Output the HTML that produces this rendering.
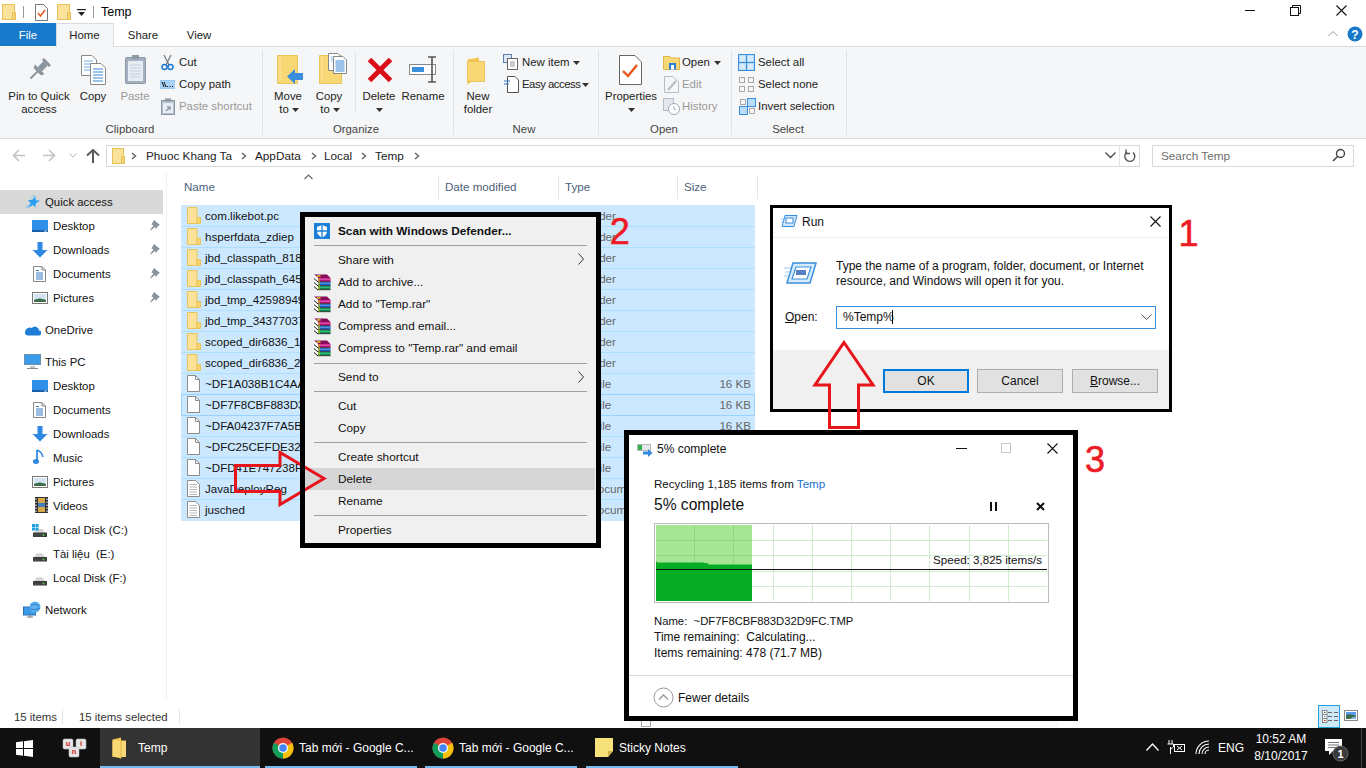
<!DOCTYPE html><html><head><meta charset="utf-8"><title>Temp</title><style>
html,body{margin:0;padding:0;width:1366px;height:768px;overflow:hidden;background:#fff;position:relative;font-family:"Liberation Sans",sans-serif;font-size:12px;color:#000}
.t{position:absolute;white-space:nowrap}
.r{position:absolute}
</style></head><body>
<svg class="r" style="left:2px;top:4px;" width="14" height="16" viewBox="0 0 14 16"><rect x="0.5" y="0.5" width="12" height="15" fill="#fbe29a" stroke="#e8c15a"/><rect x="10.5" y="8.5" width="3" height="7" fill="#f6d373" stroke="#e8c15a"/></svg>
<div class="r" style="left:23px;top:6px;width:1px;height:12px;background:#999;"></div>
<svg class="r" style="left:35px;top:4px;" width="13" height="17" viewBox="0 0 13 17"><path d="M0.5 0.5H8.5L12.5 4.5V16.5H0.5Z" fill="#fff" stroke="#777"/><path d="M3 9L5.5 12L10 6" fill="none" stroke="#e85c1c" stroke-width="1.6"/></svg>
<svg class="r" style="left:57px;top:4px;" width="14" height="16" viewBox="0 0 14 16"><rect x="0.5" y="0.5" width="12" height="15" fill="#fbe29a" stroke="#e8c15a"/><rect x="10.5" y="8.5" width="3" height="7" fill="#f6d373" stroke="#e8c15a"/></svg>
<svg class="r" style="left:77px;top:9px;" width="9" height="8" viewBox="0 0 9 8"><rect x="0" y="0" width="9" height="1.2" fill="#222"/><path d="M1 3H8L4.5 7Z" fill="#222"/></svg>
<div class="r" style="left:93px;top:6px;width:1px;height:12px;background:#999;"></div>
<div class="t " style="left:101px;top:4.0px;font-size:12.5px;line-height:16px;color:#000;">Temp</div>
<div class="r" style="left:1245px;top:10px;width:10px;height:1px;background:#111;"></div>
<svg class="r" style="left:1290px;top:5px;" width="11" height="11" viewBox="0 0 11 11"><rect x="0.5" y="2.5" width="8" height="8" fill="none" stroke="#111"/><path d="M2.5 2.5V0.5H10.5V8.5H8.5" fill="none" stroke="#111"/></svg>
<svg class="r" style="left:1336px;top:5px;" width="11" height="11" viewBox="0 0 11 11"><path d="M0.5 0.5L10.5 10.5M10.5 0.5L0.5 10.5" stroke="#111" stroke-width="1.1"/></svg>
<div class="r" style="left:0px;top:23px;width:56px;height:23px;background:#1979ca;"></div>
<div class="t" style="left:-32.0px;width:120px;text-align:center;top:27.4px;font-size:11.4px;line-height:16px;color:#fff;">File</div>
<div class="r" style="left:56px;top:23px;width:58px;height:24px;background:#f5f6f7;border:1px solid #dadbdc;border-bottom:none;box-sizing:border-box"></div>
<div class="t" style="left:24.5px;width:120px;text-align:center;top:27.4px;font-size:11.4px;line-height:16px;color:#222;">Home</div>
<div class="t" style="left:83.0px;width:120px;text-align:center;top:27.4px;font-size:11.4px;line-height:16px;color:#222;">Share</div>
<div class="t" style="left:139.0px;width:120px;text-align:center;top:27.4px;font-size:11.4px;line-height:16px;color:#222;">View</div>
<div class="r" style="left:114px;top:46px;width:1252px;height:1px;background:#dadbdc;"></div>
<svg class="r" style="left:1328px;top:30px;" width="10" height="7" viewBox="0 0 10 7"><path d="M0.5 6L5 1.5L9.5 6" fill="none" stroke="#999" stroke-width="1"/></svg>
<svg class="r" style="left:1347px;top:26px;" width="16" height="16" viewBox="0 0 16 16"><circle cx="8" cy="8" r="7.5" fill="#1979ca"/><text x="8" y="12.5" font-family="Liberation Sans" font-weight="bold" font-size="12" fill="#fff" text-anchor="middle">?</text></svg>
<div class="r" style="left:0px;top:47px;width:1366px;height:91px;background:#f5f6f7;"></div>
<div class="r" style="left:0px;top:138px;width:1366px;height:1px;background:#dadbdc;"></div>
<div class="r" style="left:262px;top:50px;width:1px;height:85px;background:#e2e3e4;"></div>
<div class="r" style="left:453px;top:50px;width:1px;height:85px;background:#e2e3e4;"></div>
<div class="r" style="left:598px;top:50px;width:1px;height:85px;background:#e2e3e4;"></div>
<div class="r" style="left:731px;top:50px;width:1px;height:85px;background:#e2e3e4;"></div>
<div class="r" style="left:846px;top:50px;width:1px;height:85px;background:#e2e3e4;"></div>
<div class="r" style="left:355px;top:52px;width:1px;height:60px;background:#e2e3e4;"></div>
<div class="t" style="left:70.0px;width:120px;text-align:center;top:121.0px;font-size:11.4px;line-height:16px;color:#444;">Clipboard</div>
<div class="t" style="left:296.0px;width:120px;text-align:center;top:121.0px;font-size:11.4px;line-height:16px;color:#444;">Organize</div>
<div class="t" style="left:464.0px;width:120px;text-align:center;top:121.0px;font-size:11.4px;line-height:16px;color:#444;">New</div>
<div class="t" style="left:604.0px;width:120px;text-align:center;top:121.0px;font-size:11.4px;line-height:16px;color:#444;">Open</div>
<div class="t" style="left:728.0px;width:120px;text-align:center;top:121.0px;font-size:11.4px;line-height:16px;color:#444;">Select</div>
<svg class="r" style="left:27px;top:58px;" width="24" height="24" viewBox="0 0 24 24"><g transform="rotate(45 12 12)" fill="#8a959e"><rect x="7" y="0" width="10" height="3" rx="0.5"/><rect x="9" y="3" width="6" height="8"/><path d="M5 11H19L17 14.5H7Z"/><rect x="11" y="14" width="2" height="10"/></g></svg>
<div class="t" style="left:-21.0px;width:120px;text-align:center;top:88.0px;font-size:11.4px;line-height:16px;color:#222;">Pin to Quick</div>
<div class="t" style="left:-21.0px;width:120px;text-align:center;top:101.0px;font-size:11.4px;line-height:16px;color:#222;">access</div>
<svg class="r" style="left:81px;top:55px;" width="26" height="30" viewBox="0 0 26 30"><path d="M0.5 0.5H11L15.5 5V20.5H0.5Z" fill="#fff" stroke="#888"/><g stroke="#6fa8e6"><path d="M3 6H12M3 9H12M3 12H12M3 15H12"/></g><path d="M9.5 8.5H20L24.5 13V29.5H9.5Z" fill="#fff" stroke="#888"/><g stroke="#3a86d6"><path d="M12 14H22M12 17H22M12 20H22M12 23H22M12 26H22"/></g></svg>
<div class="t" style="left:33.0px;width:120px;text-align:center;top:88.0px;font-size:11.4px;line-height:16px;color:#222;">Copy</div>
<svg class="r" style="left:125px;top:54px;" width="22" height="31" viewBox="0 0 22 31"><rect x="0.5" y="3.5" width="20" height="26" rx="1" fill="#a4b0bf" stroke="#8d98a6"/><rect x="3" y="7" width="15" height="20" fill="#e8edf4"/><g stroke="#c3cfdd"><path d="M5 11H16M5 14H16M5 17H16M5 20H16M5 23H16"/></g><rect x="7" y="1" width="7" height="4" fill="#8d98a6"/></svg>
<div class="t" style="left:75.0px;width:120px;text-align:center;top:88.0px;font-size:11.4px;line-height:16px;color:#999;">Paste</div>
<svg class="r" style="left:161px;top:54px;" width="13" height="17" viewBox="0 0 13 17"><path d="M3 1L8 11M10 1L5 11" stroke="#777" stroke-width="1.2"/><circle cx="3.5" cy="13" r="2.5" fill="none" stroke="#1f7ad0" stroke-width="1.5"/><circle cx="9.5" cy="13" r="2.5" fill="none" stroke="#1f7ad0" stroke-width="1.5"/></svg>
<div class="t " style="left:179px;top:54.0px;font-size:11.4px;line-height:16px;color:#222;">Cut</div>
<svg class="r" style="left:160px;top:80px;" width="15" height="9" viewBox="0 0 15 9"><rect x="0" y="0" width="15" height="9" fill="#a9d3f5" stroke="#7fb6e6" stroke-width="0.6"/><path d="M2 2L4 7M4 2L6 7" stroke="#111" stroke-width="1"/><path d="M7 6.5H8M9.5 6.5H10.5M12 6.5H13" stroke="#111" stroke-width="1"/></svg>
<div class="t " style="left:179px;top:76.0px;font-size:11.4px;line-height:16px;color:#222;">Copy path</div>
<svg class="r" style="left:161px;top:98px;" width="14" height="17" viewBox="0 0 14 17"><rect x="0.5" y="2.5" width="13" height="14" fill="#b6c1cf" stroke="#8d98a6"/><rect x="2" y="5" width="10" height="10" fill="#e8edf4"/><rect x="4" y="0.5" width="6" height="3" fill="#8d98a6"/><path d="M5 13L9 9M6 9H9V12" stroke="#8d98a6" stroke-width="1.3" fill="none"/></svg>
<div class="t " style="left:179px;top:98.0px;font-size:11.4px;line-height:16px;color:#999;">Paste shortcut</div>
<svg class="r" style="left:276px;top:55px;" width="28" height="30" viewBox="0 0 28 30"><path d="M1.5 0.5H21.5V28.5H1.5Z" fill="#f8d775" stroke="#e9c35b"/><path d="M4 2V27" stroke="#fbe7a6" stroke-width="1"/><path d="M11 21.5L19 14V18H27V25H19V29Z" fill="#3a8fdc"/></svg>
<div class="t" style="left:228.0px;width:120px;text-align:center;top:88.0px;font-size:11.4px;line-height:16px;color:#222;">Move</div>
<div class="t" style="left:224.0px;width:120px;text-align:center;top:101.0px;font-size:11.4px;line-height:16px;color:#222;">to</div>
<svg class="r" style="left:292px;top:108px;" width="7" height="4" viewBox="0 0 7 4"><path d="M0 0H7L3.5 4Z" fill="#333"/></svg>
<svg class="r" style="left:318px;top:53px;" width="29" height="32" viewBox="0 0 29 32"><path d="M1.5 2.5H23.5V30.5H1.5Z" fill="#f8d775" stroke="#e9c35b"/><path d="M4 4V29" stroke="#fbe7a6" stroke-width="1"/><path d="M10.5 0.5H20L23.5 4V17.5H10.5Z" fill="#fff" stroke="#888"/><g stroke="#9cc3ee"><path d="M12.5 4H19M12.5 6H19M12.5 8H19"/></g><path d="M15.5 3.5H25L28.5 7V20.5H15.5Z" fill="#fff" stroke="#888"/><g stroke="#3a86d6"><path d="M17.5 8H26.5M17.5 10H26.5M17.5 12H26.5M17.5 14H26.5M17.5 16H26.5M17.5 18H26.5"/></g></svg>
<div class="t" style="left:269.0px;width:120px;text-align:center;top:88.0px;font-size:11.4px;line-height:16px;color:#222;">Copy</div>
<div class="t" style="left:265.0px;width:120px;text-align:center;top:101.0px;font-size:11.4px;line-height:16px;color:#222;">to</div>
<svg class="r" style="left:333px;top:108px;" width="7" height="4" viewBox="0 0 7 4"><path d="M0 0H7L3.5 4Z" fill="#333"/></svg>
<svg class="r" style="left:366px;top:56px;" width="28" height="28" viewBox="0 0 28 28"><path d="M3.5 3.5L24.5 24.5M24.5 3.5L3.5 24.5" stroke="#d9101a" stroke-width="5"/></svg>
<div class="t" style="left:319.0px;width:120px;text-align:center;top:88.0px;font-size:11.4px;line-height:16px;color:#222;">Delete</div>
<svg class="r" style="left:376px;top:108px;" width="7" height="4" viewBox="0 0 7 4"><path d="M0 0H7L3.5 4Z" fill="#333"/></svg>
<svg class="r" style="left:409px;top:56px;" width="30" height="27" viewBox="0 0 30 27"><rect x="0.5" y="8.5" width="26" height="10" fill="#fff" stroke="#888"/><rect x="3" y="11" width="12" height="5" fill="#3a8fdc"/><path d="M19 1H27M23 1V26M19 26H27" stroke="#555" stroke-width="1.6" fill="none"/></svg>
<div class="t" style="left:363.0px;width:120px;text-align:center;top:88.0px;font-size:11.4px;line-height:16px;color:#222;">Rename</div>
<svg class="r" style="left:467px;top:57px;" width="21" height="28" viewBox="0 0 21 28"><path d="M0.5 2.5L12 0.5V20L0.5 27.5Z" fill="#f3c74f"/><path d="M0.5 4.5H17.5V24.5H0.5Z" fill="#f8d775" stroke="#e9c35b"/></svg>
<div class="t" style="left:418.0px;width:120px;text-align:center;top:88.0px;font-size:11.4px;line-height:16px;color:#222;">New</div>
<div class="t" style="left:418.0px;width:120px;text-align:center;top:101.0px;font-size:11.4px;line-height:16px;color:#222;">folder</div>
<svg class="r" style="left:503px;top:54px;" width="15" height="16" viewBox="0 0 15 16"><rect x="0.5" y="0.5" width="8" height="8" fill="#dce9f7" stroke="#5a7ea8"/><rect x="4.5" y="4.5" width="10" height="11" fill="#fff" stroke="#666"/><path d="M7 8H12M7 10H12M7 12H12" stroke="#999"/></svg>
<div class="t " style="left:522px;top:54.0px;font-size:11.4px;line-height:16px;color:#222;">New item</div>
<svg class="r" style="left:573px;top:61px;" width="7" height="4" viewBox="0 0 7 4"><path d="M0 0H7L3.5 4Z" fill="#333"/></svg>
<svg class="r" style="left:504px;top:76px;" width="15" height="17" viewBox="0 0 15 17"><path d="M3.5 0.5H11L14.5 4V16.5H3.5Z" fill="#fff" stroke="#555"/><path d="M0 5H6M0 8H5" stroke="#2f7ad0" stroke-width="1.2"/></svg>
<div class="t " style="left:522px;top:76.0px;font-size:11.4px;line-height:16px;color:#222;letter-spacing:-0.5px">Easy access</div>
<svg class="r" style="left:582px;top:83px;" width="7" height="4" viewBox="0 0 7 4"><path d="M0 0H7L3.5 4Z" fill="#333"/></svg>
<svg class="r" style="left:619px;top:55px;" width="23" height="30" viewBox="0 0 23 30"><path d="M0.5 0.5H16L22.5 7V29.5H0.5Z" fill="#fff" stroke="#666"/><path d="M4 16L9 21L18 10" fill="none" stroke="#e8561a" stroke-width="2.4"/></svg>
<div class="t" style="left:571.0px;width:120px;text-align:center;top:88.0px;font-size:11.4px;line-height:16px;color:#222;">Properties</div>
<svg class="r" style="left:628px;top:108px;" width="7" height="4" viewBox="0 0 7 4"><path d="M0 0H7L3.5 4Z" fill="#333"/></svg>
<svg class="r" style="left:663px;top:54px;" width="17" height="16" viewBox="0 0 17 16"><path d="M0.5 2.5H7L8.5 4H16.5V15.5H0.5Z" fill="#f8d775" stroke="#e0b64a"/><rect x="6" y="9" width="7" height="6.5" fill="#2a7fd4"/><rect x="8" y="11" width="3" height="4.5" fill="#fff"/></svg>
<div class="t " style="left:682px;top:54.0px;font-size:11.4px;line-height:16px;color:#222;">Open</div>
<svg class="r" style="left:714px;top:61px;" width="7" height="4" viewBox="0 0 7 4"><path d="M0 0H7L3.5 4Z" fill="#333"/></svg>
<svg class="r" style="left:664px;top:76px;" width="15" height="17" viewBox="0 0 15 17"><path d="M0.5 0.5H9L14.5 6V16.5H0.5Z" fill="#f4f6f8" stroke="#b5bcc6"/><path d="M4 14L12 5" stroke="#b5bcc6" stroke-width="2"/></svg>
<div class="t " style="left:682px;top:76.0px;font-size:11.4px;line-height:16px;color:#999;">Edit</div>
<svg class="r" style="left:663px;top:98px;" width="17" height="17" viewBox="0 0 17 17"><rect x="0.5" y="0.5" width="10" height="12" fill="#e4e8ee" stroke="#b5bcc6"/><circle cx="11" cy="11" r="5.5" fill="#fff" stroke="#a0a8b4"/><path d="M11 8V11L13 12" stroke="#a0a8b4" fill="none"/></svg>
<div class="t " style="left:682px;top:98.0px;font-size:11.4px;line-height:16px;color:#999;">History</div>
<svg class="r" style="left:738px;top:54px;" width="17" height="17" viewBox="0 0 17 17"><rect x="0.5" y="0.5" width="16" height="16" fill="#b9dcfa" stroke="#3a8fdc"/><path d="M8.5 0.5V16.5M0.5 8.5H16.5" stroke="#3a8fdc"/><g fill="#d7ebfc"><rect x="2" y="2" width="5" height="5"/><rect x="10" y="2" width="5" height="5"/><rect x="2" y="10" width="5" height="5"/><rect x="10" y="10" width="5" height="5"/></g></svg>
<div class="t " style="left:758px;top:54.0px;font-size:11.4px;line-height:16px;color:#222;">Select all</div>
<svg class="r" style="left:739px;top:77px;" width="15" height="15" viewBox="0 0 15 15"><g fill="none" stroke="#a9a9a9"><rect x="0.5" y="0.5" width="5" height="5"/><rect x="9.5" y="0.5" width="5" height="5"/><rect x="0.5" y="9.5" width="5" height="5"/><rect x="9.5" y="9.5" width="5" height="5"/></g></svg>
<div class="t " style="left:758px;top:76.0px;font-size:11.4px;line-height:16px;color:#222;">Select none</div>
<svg class="r" style="left:739px;top:98px;" width="17" height="17" viewBox="0 0 17 17"><g fill="none" stroke="#a9a9a9"><rect x="1.5" y="1.5" width="5" height="5"/><rect x="10.5" y="10.5" width="5" height="5"/></g><g fill="#b9dcfa" stroke="#3a8fdc"><rect x="8.5" y="0.5" width="8" height="8"/><rect x="0.5" y="8.5" width="8" height="8"/></g></svg>
<div class="t " style="left:758px;top:98.0px;font-size:11.4px;line-height:16px;color:#222;">Invert selection</div>
<svg class="r" style="left:12px;top:149px;" width="15" height="13" viewBox="0 0 15 13"><path d="M7 1L1.5 6.5L7 12M1.5 6.5H13" fill="none" stroke="#c4c4c4" stroke-width="1.7"/></svg>
<svg class="r" style="left:42px;top:149px;" width="15" height="13" viewBox="0 0 15 13"><path d="M7 1L12.5 6.5L7 12M12.5 6.5H1" fill="none" stroke="#c4c4c4" stroke-width="1.7"/></svg>
<svg class="r" style="left:69px;top:153px;" width="8" height="5" viewBox="0 0 8 5"><path d="M0.5 0.5L4 4L7.5 0.5" fill="none" stroke="#b8b8b8"/></svg>
<svg class="r" style="left:86px;top:149px;" width="14" height="14" viewBox="0 0 14 14"><path d="M1 6.5L7 1L13 6.5M7 1.5V14" fill="none" stroke="#5a5a5a" stroke-width="2"/></svg>
<div class="r" style="left:106px;top:145px;width:1034px;height:22px;background:#fff;border:1px solid #d9d9d9;box-sizing:border-box"></div>
<svg class="r" style="left:112px;top:148px;" width="13" height="16" viewBox="0 0 13 16"><rect x="0.5" y="0.5" width="11" height="15" fill="#fbe29a" stroke="#e8c15a"/><rect x="9.5" y="8.5" width="3" height="7" fill="#f6d373" stroke="#e8c15a"/></svg>
<svg class="r" style="left:131px;top:152px;" width="6" height="8" viewBox="0 0 6 8"><path d="M1 1L4.5 4L1 7" fill="none" stroke="#666" stroke-width="1.5"/></svg>
<div class="t " style="left:146px;top:148.0px;font-size:11.75px;line-height:16px;color:#222;">Phuoc Khang Ta</div>
<svg class="r" style="left:241px;top:152px;" width="6" height="8" viewBox="0 0 6 8"><path d="M1 1L4.5 4L1 7" fill="none" stroke="#666" stroke-width="1.5"/></svg>
<div class="t " style="left:255px;top:148.0px;font-size:11.75px;line-height:16px;color:#222;">AppData</div>
<svg class="r" style="left:311px;top:152px;" width="6" height="8" viewBox="0 0 6 8"><path d="M1 1L4.5 4L1 7" fill="none" stroke="#666" stroke-width="1.5"/></svg>
<div class="t " style="left:324px;top:148.0px;font-size:11.75px;line-height:16px;color:#222;">Local</div>
<svg class="r" style="left:361px;top:152px;" width="6" height="8" viewBox="0 0 6 8"><path d="M1 1L4.5 4L1 7" fill="none" stroke="#666" stroke-width="1.5"/></svg>
<div class="t " style="left:375px;top:148.0px;font-size:11.75px;line-height:16px;color:#222;">Temp</div>
<svg class="r" style="left:414px;top:152px;" width="6" height="8" viewBox="0 0 6 8"><path d="M1 1L4.5 4L1 7" fill="none" stroke="#666" stroke-width="1.5"/></svg>
<svg class="r" style="left:1105px;top:152px;" width="11" height="7" viewBox="0 0 11 7"><path d="M0.5 0.5L5.5 5.5L10.5 0.5" fill="none" stroke="#444" stroke-width="1.3"/></svg>
<div class="r" style="left:1119px;top:146px;width:1px;height:20px;background:#e5e5e5;"></div>
<svg class="r" style="left:1123px;top:149px;" width="13" height="14" viewBox="0 0 13 14"><path d="M10 3.5A5 5 0 1 1 4 3.2" fill="none" stroke="#555" stroke-width="1.4"/><path d="M3 0.5V4.5H7" fill="none" stroke="#555" stroke-width="1.4"/></svg>
<div class="r" style="left:1152px;top:145px;width:202px;height:22px;background:#fff;border:1px solid #d9d9d9;box-sizing:border-box"></div>
<div class="t " style="left:1161px;top:148.0px;font-size:11.75px;line-height:16px;color:#6d6d6d;">Search Temp</div>
<svg class="r" style="left:1332px;top:148px;" width="14" height="14" viewBox="0 0 14 14"><circle cx="8.5" cy="5.5" r="4" fill="none" stroke="#444" stroke-width="1.4"/><path d="M5.5 8.5L1 13" stroke="#444" stroke-width="1.6"/></svg>
<div class="r" style="left:0px;top:190px;width:163px;height:24px;background:#d9d9d9;"></div>
<div class="r" style="left:166px;top:172px;width:1px;height:528px;background:#f0f0f0;"></div>
<svg class="r" style="left:24px;top:194px;" width="18" height="16" viewBox="0 0 18 16"><path d="M11.6 2.0L11.6 6.3L16.0 6.5L11.8 9.4L11.4 13.4L9.0 10.9L4.0 13.8L6.7 8.9L3.8 6.2L8.4 5.8Z" fill="#2a9ff0"/><path d="M8 1.8H11M6.5 3.8H9M2.5 11.5H5M2 13.3H4.5" stroke="#7cc4f4" stroke-width="0.9"/></svg>
<div class="t " style="left:45px;top:193.7px;font-size:11.4px;line-height:16px;color:#111;">Quick access</div>
<svg class="r" style="left:32px;top:220px;" width="16" height="12" viewBox="0 0 16 12"><rect x="0" y="0" width="16" height="12" fill="#2f8fe6"/><rect x="0" y="10" width="16" height="2" fill="#1a5fa8"/><path d="M12 11H15" stroke="#fff" stroke-width="0.8"/></svg>
<div class="t " style="left:53px;top:217.7px;font-size:11.4px;line-height:16px;color:#111;">Desktop</div>
<svg class="r" style="left:149px;top:219px;" width="12" height="12" viewBox="0 0 12 12"><path d="M5 1L11 6L9 7L7 10L6 8L1.5 11.5L1 11L4.5 6.5L2.5 5.5Z" fill="#8a9299"/></svg>
<svg class="r" style="left:32px;top:242px;" width="16" height="16" viewBox="0 0 16 16"><path d="M5.5 0H10.5V8H15.5L8 15.5L0.5 8H5.5Z" fill="#2f8ae0"/></svg>
<div class="t " style="left:53px;top:241.7px;font-size:11.4px;line-height:16px;color:#111;">Downloads</div>
<svg class="r" style="left:149px;top:243px;" width="12" height="12" viewBox="0 0 12 12"><path d="M5 1L11 6L9 7L7 10L6 8L1.5 11.5L1 11L4.5 6.5L2.5 5.5Z" fill="#8a9299"/></svg>
<svg class="r" style="left:33px;top:266px;" width="13" height="16" viewBox="0 0 13 16"><path d="M0.5 0.5H9L12.5 4V15.5H0.5Z" fill="#fff" stroke="#888"/><path d="M9 0.5V4H12.5" fill="none" stroke="#888"/><path d="M3 4.5H6M3 7H10M3 9H10M3 11H10M3 13H10" stroke="#3a7bc8" stroke-width="1"/></svg>
<div class="t " style="left:53px;top:265.7px;font-size:11.4px;line-height:16px;color:#111;">Documents</div>
<svg class="r" style="left:149px;top:267px;" width="12" height="12" viewBox="0 0 12 12"><path d="M5 1L11 6L9 7L7 10L6 8L1.5 11.5L1 11L4.5 6.5L2.5 5.5Z" fill="#8a9299"/></svg>
<svg class="r" style="left:32px;top:292px;" width="16" height="12" viewBox="0 0 16 12"><rect x="0.5" y="0.5" width="15" height="11" fill="#fff" stroke="#777"/><rect x="2" y="2" width="12" height="8" fill="#cfe3f3"/><path d="M2 8Q7 5 14 8V10H2Z" fill="#3f6f4a"/></svg>
<div class="t " style="left:53px;top:289.7px;font-size:11.4px;line-height:16px;color:#111;">Pictures</div>
<svg class="r" style="left:149px;top:291px;" width="12" height="12" viewBox="0 0 12 12"><path d="M5 1L11 6L9 7L7 10L6 8L1.5 11.5L1 11L4.5 6.5L2.5 5.5Z" fill="#8a9299"/></svg>
<svg class="r" style="left:24px;top:323px;" width="17" height="13" viewBox="0 0 17 13"><path d="M4 12.5H14.5A2.5 2.5 0 0 0 15 7.5A4 4 0 0 0 8 5A5 5 0 0 0 1 9A3 3 0 0 0 4 12.5Z" fill="#1f7dd8"/></svg>
<div class="t " style="left:45px;top:321.7px;font-size:11.4px;line-height:16px;color:#111;">OneDrive</div>
<svg class="r" style="left:24px;top:354px;" width="17" height="15" viewBox="0 0 17 15"><rect x="0.5" y="0.5" width="16" height="10" fill="#3a9be8" stroke="#6a8fb0"/><path d="M6 13H11M3 14.5H14" stroke="#888"/></svg>
<div class="t " style="left:45px;top:353.7px;font-size:11.4px;line-height:16px;color:#111;">This PC</div>
<svg class="r" style="left:32px;top:380px;" width="16" height="12" viewBox="0 0 16 12"><rect x="0" y="0" width="16" height="12" fill="#2f8fe6"/><rect x="0" y="10" width="16" height="2" fill="#1a5fa8"/><path d="M12 11H15" stroke="#fff" stroke-width="0.8"/></svg>
<div class="t " style="left:53px;top:377.7px;font-size:11.4px;line-height:16px;color:#111;">Desktop</div>
<svg class="r" style="left:33px;top:402px;" width="13" height="16" viewBox="0 0 13 16"><path d="M0.5 0.5H9L12.5 4V15.5H0.5Z" fill="#fff" stroke="#888"/><path d="M9 0.5V4H12.5" fill="none" stroke="#888"/><path d="M3 4.5H6M3 7H10M3 9H10M3 11H10M3 13H10" stroke="#3a7bc8" stroke-width="1"/></svg>
<div class="t " style="left:53px;top:401.7px;font-size:11.4px;line-height:16px;color:#111;">Documents</div>
<svg class="r" style="left:32px;top:426px;" width="16" height="16" viewBox="0 0 16 16"><path d="M5.5 0H10.5V8H15.5L8 15.5L0.5 8H5.5Z" fill="#2f8ae0"/></svg>
<div class="t " style="left:53px;top:425.7px;font-size:11.4px;line-height:16px;color:#111;">Downloads</div>
<svg class="r" style="left:33px;top:449px;" width="13" height="16" viewBox="0 0 13 16"><path d="M4 1V12" stroke="#2f8ae0" stroke-width="1.8"/><ellipse cx="3" cy="12.5" rx="3" ry="2.5" fill="#2f8ae0"/><path d="M4 1Q9 3 10 8" fill="none" stroke="#2f8ae0" stroke-width="1.5"/></svg>
<div class="t " style="left:53px;top:449.7px;font-size:11.4px;line-height:16px;color:#111;">Music</div>
<svg class="r" style="left:32px;top:476px;" width="16" height="12" viewBox="0 0 16 12"><rect x="0.5" y="0.5" width="15" height="11" fill="#fff" stroke="#777"/><rect x="2" y="2" width="12" height="8" fill="#cfe3f3"/><path d="M2 8Q7 5 14 8V10H2Z" fill="#3f6f4a"/></svg>
<div class="t " style="left:53px;top:473.7px;font-size:11.4px;line-height:16px;color:#111;">Pictures</div>
<svg class="r" style="left:35px;top:497px;" width="13" height="16" viewBox="0 0 13 16"><rect x="0" y="0" width="13" height="16" fill="#333"/><rect x="3" y="1" width="7" height="14" fill="#d6a84a"/><rect x="3" y="6" width="7" height="4" fill="#3f7fbf"/><path d="M1 1.5V15M12 1.5V15" stroke="#fff" stroke-width="1" stroke-dasharray="1.5 1.5"/></svg>
<div class="t " style="left:53px;top:497.7px;font-size:11.4px;line-height:16px;color:#111;">Videos</div>
<svg class="r" style="left:32px;top:524px;" width="17" height="16" viewBox="0 0 17 16"><g transform="translate(0,3.5)"><path d="M2.5 5L4 1.5H11L12.5 5Z" fill="#d4d4d4"/><rect x="1" y="5" width="14" height="4.5" rx="0.5" fill="#3a3a3a"/><path d="M2 7H9M2 8.5H9" stroke="#555" stroke-width="0.6"/><circle cx="11.5" cy="7.5" r="1" fill="#4fd04f"/></g><rect x="0" y="0" width="3" height="3" fill="#1ba1e2"/><rect x="3.5" y="0" width="3" height="3" fill="#1ba1e2"/><rect x="0" y="3.5" width="3" height="3" fill="#1ba1e2"/><rect x="3.5" y="3.5" width="3" height="3" fill="#1ba1e2"/></svg>
<div class="t " style="left:53px;top:521.7px;font-size:11.4px;line-height:16px;color:#111;">Local Disk (C:)</div>
<svg class="r" style="left:32px;top:552px;" width="17" height="11" viewBox="0 0 17 11"><path d="M2.5 5L4 1.5H11L12.5 5Z" fill="#d4d4d4"/><rect x="1" y="5" width="14" height="4.5" rx="0.5" fill="#3a3a3a"/><path d="M2 7H9M2 8.5H9" stroke="#555" stroke-width="0.6"/><circle cx="11.5" cy="7.5" r="1" fill="#4fd04f"/></svg>
<div class="t " style="left:53px;top:545.7px;font-size:11.4px;line-height:16px;color:#111;">Tài liệu&nbsp; (E:)</div>
<svg class="r" style="left:32px;top:576px;" width="17" height="11" viewBox="0 0 17 11"><path d="M2.5 5L4 1.5H11L12.5 5Z" fill="#d4d4d4"/><rect x="1" y="5" width="14" height="4.5" rx="0.5" fill="#3a3a3a"/><path d="M2 7H9M2 8.5H9" stroke="#555" stroke-width="0.6"/><circle cx="11.5" cy="7.5" r="1" fill="#4fd04f"/></svg>
<div class="t " style="left:53px;top:569.7px;font-size:11.4px;line-height:16px;color:#111;">Local Disk (F:)</div>
<svg class="r" style="left:23px;top:601px;" width="19" height="17" viewBox="0 0 19 17"><rect x="0.5" y="6" width="12" height="8" fill="#3a9be8" stroke="#2a6fb0"/><path d="M4 16H10M7 14V16" stroke="#777"/><circle cx="12" cy="6" r="5.5" fill="#5ab0f0"/><path d="M8 4Q12 2 16 5M7.5 8Q12 10 17 7" stroke="#2a6fb0" fill="none" stroke-width="0.8"/></svg>
<div class="t " style="left:45px;top:601.7px;font-size:11.4px;line-height:16px;color:#111;">Network</div>
<div class="t " style="left:14px;top:708.8px;font-size:11.4px;line-height:16px;color:#333;">15 items</div>
<div class="r" style="left:62px;top:709px;width:1px;height:15px;background:#e5e5e5;"></div>
<div class="t " style="left:79px;top:708.8px;font-size:11.4px;line-height:16px;color:#333;">15 items selected</div>
<div class="r" style="left:179px;top:709px;width:1px;height:15px;background:#e5e5e5;"></div>
<div class="r" style="left:1318px;top:705px;width:22px;height:23px;background:#cde8f7;border:1px solid #26a0da;box-sizing:border-box"></div>
<svg class="r" style="left:1322px;top:710px;" width="17" height="13" viewBox="0 0 17 13"><rect x="0.5" y="0.5" width="4.5" height="12" fill="#fff" stroke="#888"/><path d="M0.5 4.5H5M0.5 8.5H5" stroke="#888"/><circle cx="2.75" cy="2.5" r="0.8" fill="#4a7a50"/><circle cx="2.75" cy="6.5" r="0.8" fill="#5a9af0"/><circle cx="2.75" cy="10.5" r="0.8" fill="#d02020"/><path d="M6 2.5H10M12 2.5H16M6 6.5H10M12 6.5H16M6 10.5H10M12 10.5H16" stroke="#666" stroke-width="1"/></svg>
<svg class="r" style="left:1344px;top:710px;" width="14" height="11" viewBox="0 0 14 11"><rect x="0.5" y="0.5" width="13" height="10" fill="#fff" stroke="#888"/><rect x="2" y="2" width="10" height="7" fill="#5a9af0"/><path d="M2 5Q6 3 12 6V9H2Z" fill="#3f6f4a"/><path d="M6 9Q9 6 12 7V9Z" fill="#8ab8d8"/></svg>
<div class="t " style="left:184px;top:178.8px;font-size:11.6px;line-height:16px;color:#4c607a;">Name</div>
<svg class="r" style="left:304px;top:174px;" width="9" height="6" viewBox="0 0 9 6"><path d="M0.5 5L4.5 1L8.5 5" fill="none" stroke="#666" stroke-width="1.1"/></svg>
<div class="r" style="left:438px;top:175px;width:1px;height:24px;background:#e5e5e5;"></div>
<div class="r" style="left:558px;top:175px;width:1px;height:24px;background:#e5e5e5;"></div>
<div class="r" style="left:677px;top:175px;width:1px;height:24px;background:#e5e5e5;"></div>
<div class="r" style="left:757px;top:175px;width:1px;height:24px;background:#e5e5e5;"></div>
<div class="t " style="left:445px;top:178.8px;font-size:11.6px;line-height:16px;color:#4c607a;">Date modified</div>
<div class="t " style="left:565px;top:178.8px;font-size:11.6px;line-height:16px;color:#4c607a;">Type</div>
<div class="t " style="left:684px;top:178.8px;font-size:11.6px;line-height:16px;color:#4c607a;">Size</div>
<div class="r" style="left:181px;top:205px;width:574px;height:316px;background:#cce8ff;"></div>
<div class="r" style="left:181px;top:226px;width:574px;height:1px;background:#ade0ff;"></div>
<div class="r" style="left:181px;top:247px;width:574px;height:1px;background:#ade0ff;"></div>
<div class="r" style="left:181px;top:268px;width:574px;height:1px;background:#ade0ff;"></div>
<div class="r" style="left:181px;top:289px;width:574px;height:1px;background:#ade0ff;"></div>
<div class="r" style="left:181px;top:310px;width:574px;height:1px;background:#ade0ff;"></div>
<div class="r" style="left:181px;top:331px;width:574px;height:1px;background:#ade0ff;"></div>
<div class="r" style="left:181px;top:352px;width:574px;height:1px;background:#ade0ff;"></div>
<div class="r" style="left:181px;top:373px;width:574px;height:1px;background:#ade0ff;"></div>
<div class="r" style="left:181px;top:394px;width:574px;height:1px;background:#ade0ff;"></div>
<div class="r" style="left:181px;top:415px;width:574px;height:1px;background:#ade0ff;"></div>
<div class="r" style="left:181px;top:436px;width:574px;height:1px;background:#ade0ff;"></div>
<div class="r" style="left:181px;top:457px;width:574px;height:1px;background:#ade0ff;"></div>
<div class="r" style="left:181px;top:478px;width:574px;height:1px;background:#ade0ff;"></div>
<div class="r" style="left:181px;top:499px;width:574px;height:1px;background:#ade0ff;"></div>
<div class="r" style="left:181px;top:394px;width:574px;height:22px;background:transparent;border:1px solid #99d1ff;box-sizing:border-box"></div>
<svg class="r" style="left:187px;top:207px;" width="14" height="17" viewBox="0 0 14 17"><path d="M0.5 0.5H10V16.5H0.5Z" fill="#fce199" stroke="#e8c45a"/><path d="M10 10.5H13.5V16.5H10Z" fill="#f7d46c" stroke="#e8c45a"/></svg>
<div class="t " style="left:205px;top:207.5px;font-size:11.6px;line-height:16px;color:#111;">com.likebot.pc</div>
<div class="t " style="left:445px;top:207.5px;font-size:11.6px;line-height:16px;color:#666;">8/10/2017 9:00 AM</div>
<div class="t " style="left:565px;top:207.5px;font-size:11.6px;line-height:16px;color:#666;">File folder</div>
<svg class="r" style="left:187px;top:228px;" width="14" height="17" viewBox="0 0 14 17"><path d="M0.5 0.5H10V16.5H0.5Z" fill="#fce199" stroke="#e8c45a"/><path d="M10 10.5H13.5V16.5H10Z" fill="#f7d46c" stroke="#e8c45a"/></svg>
<div class="t " style="left:205px;top:228.5px;font-size:11.6px;line-height:16px;color:#111;">hsperfdata_zdiep</div>
<div class="t " style="left:445px;top:228.5px;font-size:11.6px;line-height:16px;color:#666;">8/10/2017 9:01 AM</div>
<div class="t " style="left:565px;top:228.5px;font-size:11.6px;line-height:16px;color:#666;">File folder</div>
<svg class="r" style="left:187px;top:249px;" width="14" height="17" viewBox="0 0 14 17"><path d="M0.5 0.5H10V16.5H0.5Z" fill="#fce199" stroke="#e8c45a"/><path d="M10 10.5H13.5V16.5H10Z" fill="#f7d46c" stroke="#e8c45a"/></svg>
<div class="t " style="left:205px;top:249.5px;font-size:11.6px;line-height:16px;color:#111;">jbd_classpath_8184</div>
<div class="t " style="left:445px;top:249.5px;font-size:11.6px;line-height:16px;color:#666;">8/10/2017 9:02 AM</div>
<div class="t " style="left:565px;top:249.5px;font-size:11.6px;line-height:16px;color:#666;">File folder</div>
<svg class="r" style="left:187px;top:270px;" width="14" height="17" viewBox="0 0 14 17"><path d="M0.5 0.5H10V16.5H0.5Z" fill="#fce199" stroke="#e8c45a"/><path d="M10 10.5H13.5V16.5H10Z" fill="#f7d46c" stroke="#e8c45a"/></svg>
<div class="t " style="left:205px;top:270.5px;font-size:11.6px;line-height:16px;color:#111;">jbd_classpath_6451</div>
<div class="t " style="left:445px;top:270.5px;font-size:11.6px;line-height:16px;color:#666;">8/10/2017 9:03 AM</div>
<div class="t " style="left:565px;top:270.5px;font-size:11.6px;line-height:16px;color:#666;">File folder</div>
<svg class="r" style="left:187px;top:291px;" width="14" height="17" viewBox="0 0 14 17"><path d="M0.5 0.5H10V16.5H0.5Z" fill="#fce199" stroke="#e8c45a"/><path d="M10 10.5H13.5V16.5H10Z" fill="#f7d46c" stroke="#e8c45a"/></svg>
<div class="t " style="left:205px;top:291.5px;font-size:11.6px;line-height:16px;color:#111;">jbd_tmp_425989492</div>
<div class="t " style="left:445px;top:291.5px;font-size:11.6px;line-height:16px;color:#666;">8/10/2017 9:04 AM</div>
<div class="t " style="left:565px;top:291.5px;font-size:11.6px;line-height:16px;color:#666;">File folder</div>
<svg class="r" style="left:187px;top:312px;" width="14" height="17" viewBox="0 0 14 17"><path d="M0.5 0.5H10V16.5H0.5Z" fill="#fce199" stroke="#e8c45a"/><path d="M10 10.5H13.5V16.5H10Z" fill="#f7d46c" stroke="#e8c45a"/></svg>
<div class="t " style="left:205px;top:312.5px;font-size:11.6px;line-height:16px;color:#111;">jbd_tmp_343770372</div>
<div class="t " style="left:445px;top:312.5px;font-size:11.6px;line-height:16px;color:#666;">8/10/2017 9:05 AM</div>
<div class="t " style="left:565px;top:312.5px;font-size:11.6px;line-height:16px;color:#666;">File folder</div>
<svg class="r" style="left:187px;top:333px;" width="14" height="17" viewBox="0 0 14 17"><path d="M0.5 0.5H10V16.5H0.5Z" fill="#fce199" stroke="#e8c45a"/><path d="M10 10.5H13.5V16.5H10Z" fill="#f7d46c" stroke="#e8c45a"/></svg>
<div class="t " style="left:205px;top:333.5px;font-size:11.6px;line-height:16px;color:#111;">scoped_dir6836_1456</div>
<div class="t " style="left:445px;top:333.5px;font-size:11.6px;line-height:16px;color:#666;">8/10/2017 9:06 AM</div>
<div class="t " style="left:565px;top:333.5px;font-size:11.6px;line-height:16px;color:#666;">File folder</div>
<svg class="r" style="left:187px;top:354px;" width="14" height="17" viewBox="0 0 14 17"><path d="M0.5 0.5H10V16.5H0.5Z" fill="#fce199" stroke="#e8c45a"/><path d="M10 10.5H13.5V16.5H10Z" fill="#f7d46c" stroke="#e8c45a"/></svg>
<div class="t " style="left:205px;top:354.5px;font-size:11.6px;line-height:16px;color:#111;">scoped_dir6836_2478</div>
<div class="t " style="left:445px;top:354.5px;font-size:11.6px;line-height:16px;color:#666;">8/10/2017 9:07 AM</div>
<div class="t " style="left:565px;top:354.5px;font-size:11.6px;line-height:16px;color:#666;">File folder</div>
<svg class="r" style="left:187px;top:375px;" width="13" height="17" viewBox="0 0 13 17"><path d="M0.5 0.5H8.5L12.5 4.5V16.5H0.5Z" fill="#fff" stroke="#8c8c8c"/><path d="M8.5 0.5V4.5H12.5" fill="none" stroke="#8c8c8c"/></svg>
<div class="t " style="left:205px;top:375.5px;font-size:11.6px;line-height:16px;color:#111;">~DF1A038B1C4AA23F</div>
<div class="t " style="left:445px;top:375.5px;font-size:11.6px;line-height:16px;color:#666;">8/10/2017 9:08 AM</div>
<div class="t " style="left:565px;top:375.5px;font-size:11.6px;line-height:16px;color:#666;">TMP File</div>
<div class="t" style="left:551px;width:200px;text-align:right;top:375.5px;font-size:11.6px;line-height:16px;color:#666;">16 KB</div>
<svg class="r" style="left:187px;top:396px;" width="13" height="17" viewBox="0 0 13 17"><path d="M0.5 0.5H8.5L12.5 4.5V16.5H0.5Z" fill="#fff" stroke="#8c8c8c"/><path d="M8.5 0.5V4.5H12.5" fill="none" stroke="#8c8c8c"/></svg>
<div class="t " style="left:205px;top:396.5px;font-size:11.6px;line-height:16px;color:#111;">~DF7F8CBF883D32D9</div>
<div class="t " style="left:445px;top:396.5px;font-size:11.6px;line-height:16px;color:#666;">8/10/2017 9:09 AM</div>
<div class="t " style="left:565px;top:396.5px;font-size:11.6px;line-height:16px;color:#666;">TMP File</div>
<div class="t" style="left:551px;width:200px;text-align:right;top:396.5px;font-size:11.6px;line-height:16px;color:#666;">16 KB</div>
<svg class="r" style="left:187px;top:417px;" width="13" height="17" viewBox="0 0 13 17"><path d="M0.5 0.5H8.5L12.5 4.5V16.5H0.5Z" fill="#fff" stroke="#8c8c8c"/><path d="M8.5 0.5V4.5H12.5" fill="none" stroke="#8c8c8c"/></svg>
<div class="t " style="left:205px;top:417.5px;font-size:11.6px;line-height:16px;color:#111;">~DFA04237F7A5B1C2</div>
<div class="t " style="left:445px;top:417.5px;font-size:11.6px;line-height:16px;color:#666;">8/10/2017 9:00 AM</div>
<div class="t " style="left:565px;top:417.5px;font-size:11.6px;line-height:16px;color:#666;">TMP File</div>
<div class="t" style="left:551px;width:200px;text-align:right;top:417.5px;font-size:11.6px;line-height:16px;color:#666;">16 KB</div>
<svg class="r" style="left:187px;top:438px;" width="13" height="17" viewBox="0 0 13 17"><path d="M0.5 0.5H8.5L12.5 4.5V16.5H0.5Z" fill="#fff" stroke="#8c8c8c"/><path d="M8.5 0.5V4.5H12.5" fill="none" stroke="#8c8c8c"/></svg>
<div class="t " style="left:205px;top:438.5px;font-size:11.6px;line-height:16px;color:#111;">~DFC25CEFDE32A1F0</div>
<div class="t " style="left:445px;top:438.5px;font-size:11.6px;line-height:16px;color:#666;">8/10/2017 9:01 AM</div>
<div class="t " style="left:565px;top:438.5px;font-size:11.6px;line-height:16px;color:#666;">TMP File</div>
<div class="t" style="left:551px;width:200px;text-align:right;top:438.5px;font-size:11.6px;line-height:16px;color:#666;">16 KB</div>
<svg class="r" style="left:187px;top:459px;" width="13" height="17" viewBox="0 0 13 17"><path d="M0.5 0.5H8.5L12.5 4.5V16.5H0.5Z" fill="#fff" stroke="#8c8c8c"/><path d="M8.5 0.5V4.5H12.5" fill="none" stroke="#8c8c8c"/></svg>
<div class="t " style="left:205px;top:459.5px;font-size:11.6px;line-height:16px;color:#111;">~DFD41E747238FF12</div>
<div class="t " style="left:445px;top:459.5px;font-size:11.6px;line-height:16px;color:#666;">8/10/2017 9:02 AM</div>
<div class="t " style="left:565px;top:459.5px;font-size:11.6px;line-height:16px;color:#666;">TMP File</div>
<div class="t" style="left:551px;width:200px;text-align:right;top:459.5px;font-size:11.6px;line-height:16px;color:#666;">16 KB</div>
<svg class="r" style="left:187px;top:480px;" width="13" height="17" viewBox="0 0 13 17"><path d="M0.5 0.5H8.5L12.5 4.5V16.5H0.5Z" fill="#fff" stroke="#8c8c8c"/><path d="M2.5 4.5H10M2.5 7H10M2.5 9.5H10M2.5 12H10M2.5 14.5H10" stroke="#9a9a9a" stroke-width="0.7"/></svg>
<div class="t " style="left:205px;top:480.5px;font-size:11.6px;line-height:16px;color:#111;">JavaDeployReg</div>
<div class="t " style="left:445px;top:480.5px;font-size:11.6px;line-height:16px;color:#666;">8/10/2017 9:03 AM</div>
<div class="t " style="left:565px;top:480.5px;font-size:11.6px;line-height:16px;color:#666;">Text Document</div>
<svg class="r" style="left:187px;top:501px;" width="13" height="17" viewBox="0 0 13 17"><path d="M0.5 0.5H8.5L12.5 4.5V16.5H0.5Z" fill="#fff" stroke="#8c8c8c"/><path d="M2.5 4.5H10M2.5 7H10M2.5 9.5H10M2.5 12H10M2.5 14.5H10" stroke="#9a9a9a" stroke-width="0.7"/></svg>
<div class="t " style="left:205px;top:501.5px;font-size:11.6px;line-height:16px;color:#111;">jusched</div>
<div class="t " style="left:445px;top:501.5px;font-size:11.6px;line-height:16px;color:#666;">8/10/2017 9:04 AM</div>
<div class="t " style="left:565px;top:501.5px;font-size:11.6px;line-height:16px;color:#666;">Text Document</div>
<div class="r" style="left:305px;top:217px;width:291px;height:326px;background:#f0f0f0;"></div>
<svg class="r" style="left:314px;top:223px;" width="16" height="16" viewBox="0 0 16 16"><rect x="0" y="0" width="16" height="16" fill="#1a7fd6"/><path d="M8 2L13 4V8Q13 12 8 14.5Q3 12 3 8V4Z" fill="#fff"/><path d="M8 2V14.5M3 8H13" stroke="#1a7fd6" stroke-width="1.3"/></svg>
<div class="t " style="left:338px;top:223.0px;font-size:11.8px;line-height:16px;color:#111;font-weight:bold">Scan with Windows Defender...</div>
<div class="r" style="left:314px;top:245px;width:273px;height:1px;background:#a0a0a0;"></div>
<div class="t " style="left:338px;top:252.0px;font-size:11.8px;line-height:16px;color:#111;">Share with</div>
<svg class="r" style="left:578px;top:253px;" width="6" height="12" viewBox="0 0 6 12"><path d="M0.5 0.5L5.5 6L0.5 11.5" fill="none" stroke="#333"/></svg>
<svg class="r" style="left:314px;top:274px;" width="17" height="17" viewBox="0 0 17 17"><path d="M0 0.5H13L16.5 4H4Z" fill="#8a0a5a"/><rect x="3" y="1.2" width="3.5" height="1.5" fill="#d8d820"/><path d="M0 0.5L4 4V16L0 12.5Z" fill="#fff"/><path d="M0 4.5L4 8M0 8.5L4 12M0 12.5L4 16" stroke="#111" stroke-width="1"/><rect x="4" y="4" width="12.5" height="3.5" fill="#b8107a"/><rect x="5" y="4.6" width="11" height="1" fill="#f070c0"/><rect x="4" y="8" width="12.5" height="3.5" fill="#1a5fc0"/><rect x="5" y="8.6" width="11" height="1" fill="#70b8ff"/><rect x="4" y="12" width="12.5" height="3.5" fill="#108a4a"/><rect x="5" y="12.6" width="11" height="1" fill="#40e0a0"/><path d="M4 7.7H16.5M4 11.7H16.5M4 15.7H16.5" stroke="#111" stroke-width="0.8"/><path d="M5 4V15.5" stroke="#e0d000" stroke-width="1"/></svg>
<div class="t " style="left:338px;top:274.0px;font-size:11.8px;line-height:16px;color:#111;">Add to archive...</div>
<svg class="r" style="left:314px;top:296px;" width="17" height="17" viewBox="0 0 17 17"><path d="M0 0.5H13L16.5 4H4Z" fill="#8a0a5a"/><rect x="3" y="1.2" width="3.5" height="1.5" fill="#d8d820"/><path d="M0 0.5L4 4V16L0 12.5Z" fill="#fff"/><path d="M0 4.5L4 8M0 8.5L4 12M0 12.5L4 16" stroke="#111" stroke-width="1"/><rect x="4" y="4" width="12.5" height="3.5" fill="#b8107a"/><rect x="5" y="4.6" width="11" height="1" fill="#f070c0"/><rect x="4" y="8" width="12.5" height="3.5" fill="#1a5fc0"/><rect x="5" y="8.6" width="11" height="1" fill="#70b8ff"/><rect x="4" y="12" width="12.5" height="3.5" fill="#108a4a"/><rect x="5" y="12.6" width="11" height="1" fill="#40e0a0"/><path d="M4 7.7H16.5M4 11.7H16.5M4 15.7H16.5" stroke="#111" stroke-width="0.8"/><path d="M5 4V15.5" stroke="#e0d000" stroke-width="1"/></svg>
<div class="t " style="left:338px;top:296.0px;font-size:11.8px;line-height:16px;color:#111;">Add to "Temp.rar"</div>
<svg class="r" style="left:314px;top:318px;" width="17" height="17" viewBox="0 0 17 17"><path d="M0 0.5H13L16.5 4H4Z" fill="#8a0a5a"/><rect x="3" y="1.2" width="3.5" height="1.5" fill="#d8d820"/><path d="M0 0.5L4 4V16L0 12.5Z" fill="#fff"/><path d="M0 4.5L4 8M0 8.5L4 12M0 12.5L4 16" stroke="#111" stroke-width="1"/><rect x="4" y="4" width="12.5" height="3.5" fill="#b8107a"/><rect x="5" y="4.6" width="11" height="1" fill="#f070c0"/><rect x="4" y="8" width="12.5" height="3.5" fill="#1a5fc0"/><rect x="5" y="8.6" width="11" height="1" fill="#70b8ff"/><rect x="4" y="12" width="12.5" height="3.5" fill="#108a4a"/><rect x="5" y="12.6" width="11" height="1" fill="#40e0a0"/><path d="M4 7.7H16.5M4 11.7H16.5M4 15.7H16.5" stroke="#111" stroke-width="0.8"/><path d="M5 4V15.5" stroke="#e0d000" stroke-width="1"/></svg>
<div class="t " style="left:338px;top:318.0px;font-size:11.8px;line-height:16px;color:#111;">Compress and email...</div>
<svg class="r" style="left:314px;top:340px;" width="17" height="17" viewBox="0 0 17 17"><path d="M0 0.5H13L16.5 4H4Z" fill="#8a0a5a"/><rect x="3" y="1.2" width="3.5" height="1.5" fill="#d8d820"/><path d="M0 0.5L4 4V16L0 12.5Z" fill="#fff"/><path d="M0 4.5L4 8M0 8.5L4 12M0 12.5L4 16" stroke="#111" stroke-width="1"/><rect x="4" y="4" width="12.5" height="3.5" fill="#b8107a"/><rect x="5" y="4.6" width="11" height="1" fill="#f070c0"/><rect x="4" y="8" width="12.5" height="3.5" fill="#1a5fc0"/><rect x="5" y="8.6" width="11" height="1" fill="#70b8ff"/><rect x="4" y="12" width="12.5" height="3.5" fill="#108a4a"/><rect x="5" y="12.6" width="11" height="1" fill="#40e0a0"/><path d="M4 7.7H16.5M4 11.7H16.5M4 15.7H16.5" stroke="#111" stroke-width="0.8"/><path d="M5 4V15.5" stroke="#e0d000" stroke-width="1"/></svg>
<div class="t " style="left:338px;top:340.0px;font-size:11.8px;line-height:16px;color:#111;">Compress to "Temp.rar" and email</div>
<div class="r" style="left:314px;top:363px;width:273px;height:1px;background:#a0a0a0;"></div>
<div class="t " style="left:338px;top:369.0px;font-size:11.8px;line-height:16px;color:#111;">Send to</div>
<svg class="r" style="left:578px;top:371px;" width="6" height="12" viewBox="0 0 6 12"><path d="M0.5 0.5L5.5 6L0.5 11.5" fill="none" stroke="#333"/></svg>
<div class="r" style="left:314px;top:391px;width:273px;height:1px;background:#a0a0a0;"></div>
<div class="t " style="left:338px;top:398.0px;font-size:11.8px;line-height:16px;color:#111;">Cut</div>
<div class="t " style="left:338px;top:420.0px;font-size:11.8px;line-height:16px;color:#111;">Copy</div>
<div class="r" style="left:314px;top:442px;width:273px;height:1px;background:#a0a0a0;"></div>
<div class="t " style="left:338px;top:449.0px;font-size:11.8px;line-height:16px;color:#111;">Create shortcut</div>
<div class="r" style="left:305px;top:468px;width:290px;height:22px;background:#d6d6d6;"></div>
<div class="t " style="left:338px;top:471.0px;font-size:11.8px;line-height:16px;color:#111;">Delete</div>
<div class="t " style="left:338px;top:493.0px;font-size:11.8px;line-height:16px;color:#111;">Rename</div>
<div class="r" style="left:314px;top:515px;width:273px;height:1px;background:#a0a0a0;"></div>
<div class="t " style="left:338px;top:522.0px;font-size:11.8px;line-height:16px;color:#111;">Properties</div>
<svg class="r" style="left:225px;top:445px;" width="110" height="68" viewBox="0 0 110 68"><path d="M10.5 20.5H55V7.5L99 33.5L55 59.5V46.5H10.5Z" fill="none" stroke="#e8141c" stroke-width="3" stroke-linejoin="miter"/></svg>
<div class="r" style="left:300px;top:212px;width:301px;height:336px;background:transparent;border:5px solid #000;box-sizing:border-box"></div>
<div class="r" style="left:770px;top:205px;width:402px;height:207px;background:#fff;"></div>
<div class="r" style="left:773px;top:350px;width:396px;height:59px;background:#f0f0f0;"></div>
<div class="r" style="left:773px;top:237px;width:396px;height:1px;background:#f0f0f0;"></div>
<svg class="r" style="left:781px;top:215px;" width="17" height="12" viewBox="0 0 17 12"><path d="M4 0.5H16L13 11.5H1Z" fill="#cfe6fb" stroke="#3a8fdc"/><rect x="5" y="3" width="7" height="5" fill="#fff" stroke="#3a8fdc"/><path d="M0 4H3M0 7H2" stroke="#8cc0ee"/></svg>
<div class="t " style="left:802px;top:214.0px;font-size:12px;line-height:16px;color:#111;">Run</div>
<svg class="r" style="left:1150px;top:216px;" width="11" height="11" viewBox="0 0 11 11"><path d="M0.5 0.5L10.5 10.5M10.5 0.5L0.5 10.5" stroke="#111" stroke-width="1.1"/></svg>
<svg class="r" style="left:784px;top:262px;" width="33" height="22" viewBox="0 0 33 22"><path d="M9 1H32L26 21H3Z" fill="#d6ebfc" stroke="#3a8fdc" stroke-width="1.5"/><path d="M12 5H27L23 17H8Z" fill="#fff" stroke="#3a8fdc" stroke-width="1.2"/><rect x="12" y="8" width="10" height="5" fill="#5a7fc0"/><path d="M0 6H7M1 10H6M0 14H5" stroke="#9ccaf2" stroke-width="1.2"/></svg>
<div class="t " style="left:836px;top:258.0px;font-size:12px;line-height:16px;color:#111;">Type the name of a program, folder, document, or Internet</div>
<div class="t " style="left:836px;top:273.0px;font-size:12px;line-height:16px;color:#111;">resource, and Windows will open it for you.</div>
<div class="t " style="left:785px;top:309.0px;font-size:12px;line-height:16px;color:#111;"><u>O</u>pen:</div>
<div class="r" style="left:836px;top:306px;width:320px;height:23px;background:#fff;border:1px solid #3c8ee0;box-sizing:border-box"></div>
<div class="t " style="left:843px;top:309.0px;font-size:12px;line-height:16px;color:#111;">%Temp%</div>
<div class="r" style="left:892px;top:310px;width:1px;height:14px;background:#000;"></div>
<svg class="r" style="left:1141px;top:314px;" width="11" height="7" viewBox="0 0 11 7"><path d="M0.5 0.5L5.5 5.5L10.5 0.5" fill="none" stroke="#555" stroke-width="1"/></svg>
<div class="r" style="left:883px;top:369px;width:86px;height:24px;background:#e1e1e1;border:2px solid #0078d7;box-sizing:border-box"></div>
<div class="t" style="left:866.0px;width:120px;text-align:center;top:373.0px;font-size:12px;line-height:16px;color:#111;">OK</div>
<div class="r" style="left:977px;top:369px;width:86px;height:24px;background:#e1e1e1;border:1px solid #adadad;box-sizing:border-box"></div>
<div class="t" style="left:960.0px;width:120px;text-align:center;top:373.0px;font-size:12px;line-height:16px;color:#111;">Cancel</div>
<div class="r" style="left:1072px;top:369px;width:86px;height:24px;background:#e1e1e1;border:1px solid #adadad;box-sizing:border-box"></div>
<div class="t" style="left:1055.0px;width:120px;text-align:center;top:373.0px;font-size:12px;line-height:16px;color:#111;"><u>B</u>rowse...</div>
<div class="r" style="left:770px;top:205px;width:402px;height:207px;background:transparent;border:3px solid #000;box-sizing:border-box"></div>
<div class="r" style="left:624px;top:430px;width:454px;height:291px;background:#fff;"></div>
<div class="r" style="left:629px;top:675px;width:444px;height:1px;background:#dcdcdc;"></div>
<svg class="r" style="left:637px;top:444px;" width="16" height="13" viewBox="0 0 16 13"><rect x="0.5" y="0.5" width="13" height="6" fill="#e6e6e6" stroke="#bbb"/><rect x="1" y="1" width="4" height="5" fill="#2fb24a"/><path d="M6 7.5H11V5L15.5 9L11 13V10.5H6Z" fill="#2f8ae0"/></svg>
<div class="t " style="left:657px;top:441.0px;font-size:12px;line-height:16px;color:#111;">5% complete</div>
<div class="r" style="left:956px;top:448px;width:11px;height:1px;background:#111;"></div>
<div class="r" style="left:1001px;top:443px;width:10px;height:10px;background:transparent;border:1px solid #c8c8c8;box-sizing:border-box"></div>
<svg class="r" style="left:1047px;top:443px;" width="11" height="11" viewBox="0 0 11 11"><path d="M0.5 0.5L10.5 10.5M10.5 0.5L0.5 10.5" stroke="#111" stroke-width="1.1"/></svg>
<div class="t " style="left:654px;top:476.0px;font-size:11.6px;line-height:16px;color:#111;">Recycling 1,185 items from <span style="color:#1c6fc7">Temp</span></div>
<div class="t " style="left:654px;top:495.0px;font-size:15.6px;line-height:20px;color:#111;">5% complete</div>
<div class="r" style="left:990px;top:502px;width:2.3px;height:8.5px;background:#111;"></div>
<div class="r" style="left:995px;top:502px;width:2.3px;height:8.5px;background:#111;"></div>
<svg class="r" style="left:1036px;top:502px;" width="9" height="9" viewBox="0 0 9 9"><path d="M1 1L8 8M8 1L1 8" stroke="#111" stroke-width="2"/></svg>
<div class="r" style="left:654px;top:523px;width:395px;height:80px;background:#fff;border:1px solid #bcbcbc;box-sizing:border-box"></div>
<div class="r" style="left:656px;top:525px;width:96px;height:76px;background:#a6e593;"></div>
<svg class="r" style="left:656px;top:525px;" width="391" height="76" viewBox="0 0 391 76"><path d="M38.5 0V76" stroke="#cfeccf" stroke-width="1"/><path d="M77.5 0V76" stroke="#cfeccf" stroke-width="1"/><path d="M117.5 0V76" stroke="#cfeccf" stroke-width="1"/><path d="M156.5 0V76" stroke="#cfeccf" stroke-width="1"/><path d="M195.5 0V76" stroke="#cfeccf" stroke-width="1"/><path d="M234.5 0V76" stroke="#cfeccf" stroke-width="1"/><path d="M273.5 0V76" stroke="#cfeccf" stroke-width="1"/><path d="M313.5 0V76" stroke="#cfeccf" stroke-width="1"/><path d="M352.5 0V76" stroke="#cfeccf" stroke-width="1"/><path d="M0 15.5H391" stroke="#cfeccf" stroke-width="1"/><path d="M0 30.5H391" stroke="#cfeccf" stroke-width="1"/><path d="M0 46.5H391" stroke="#cfeccf" stroke-width="1"/><path d="M0 61.5H391" stroke="#cfeccf" stroke-width="1"/></svg>
<svg class="r" style="left:656px;top:525px;" width="96" height="76" viewBox="0 0 96 76"><path d="M38.5 0V76" stroke="#8fd67f" stroke-width="1"/><path d="M77.5 0V76" stroke="#8fd67f" stroke-width="1"/><path d="M0 15.5H96" stroke="#8fd67f" stroke-width="1"/><path d="M0 30.5H96" stroke="#8fd67f" stroke-width="1"/></svg>
<svg class="r" style="left:656px;top:561px;" width="96" height="40" viewBox="0 0 96 40"><path d="M0 0.5H1V1.5H48V2H52V3.5H96V40H0Z" fill="#06ac24"/></svg>
<div class="r" style="left:656px;top:569px;width:391px;height:1.4px;background:#111;"></div>
<div class="t" style="left:842px;width:200px;text-align:right;top:552.0px;font-size:11.6px;line-height:16px;color:#111;background:rgba(255,255,255,0)">Speed: 3,825 items/s</div>
<div class="t " style="left:654px;top:613.0px;font-size:11.3px;line-height:16px;color:#111;">Name:&nbsp; ~DF7F8CBF883D32D9FC.TMP</div>
<div class="t " style="left:654px;top:629.0px;font-size:12px;line-height:16px;color:#111;">Time remaining:&nbsp; Calculating...</div>
<div class="t " style="left:654px;top:645.0px;font-size:12px;line-height:16px;color:#111;">Items remaining: 478 (71.7 MB)</div>
<svg class="r" style="left:653px;top:687px;" width="21" height="21" viewBox="0 0 21 21"><circle cx="10.5" cy="10.5" r="9.5" fill="#fff" stroke="#999"/><path d="M6 12.5L10.5 8L15 12.5" fill="none" stroke="#999" stroke-width="1.3"/></svg>
<div class="t " style="left:678px;top:690.0px;font-size:12px;line-height:16px;color:#111;">Fewer details</div>
<div class="r" style="left:624px;top:430px;width:454px;height:291px;background:transparent;border:5px solid #000;box-sizing:border-box"></div>
<div class="r" style="left:629px;top:721px;width:430px;height:6px;overflow:hidden;background:#fafafa"><div class="t" style="left:32px;top:-12px;font-size:11.6px;line-height:16px;color:#222">~DF3A2B1C9E8F7D6C.TMP</div><div class="t" style="left:266px;top:-12px;font-size:11.6px;line-height:16px;color:#666">8/10/2017 9:01 AM</div><div class="t" style="left:385px;top:-12px;font-size:11.6px;line-height:16px;color:#666">16 KB</div><div class="r" style="left:12px;top:0;width:10px;height:6px;border:1px solid #aaa;border-top:none;box-sizing:border-box"></div></div>
<svg class="r" style="left:810px;top:338px;" width="68" height="93" viewBox="0 0 68 93"><path d="M34 4.5L63 47H48.5V89.5H19.5V47H5Z" fill="none" stroke="#e8141c" stroke-width="3"/></svg>
<div class="t " style="left:1178.5px;top:214.4px;font-size:36px;line-height:40px;color:#ed1c24;-webkit-text-stroke:0.6px #ed1c24">1</div>
<div class="t " style="left:609.7px;top:212.4px;font-size:36px;line-height:40px;color:#ed1c24;-webkit-text-stroke:0.6px #ed1c24">2</div>
<div class="t " style="left:1085px;top:439.8px;font-size:36px;line-height:40px;color:#ed1c24;-webkit-text-stroke:0.6px #ed1c24">3</div>
<div class="r" style="left:0px;top:728px;width:1366px;height:40px;background:#101010;"></div>
<svg class="r" style="left:16px;top:740px;" width="17" height="17" viewBox="0 0 17 17"><path d="M0 2.3L7 1.3V8H0ZM8 1.15L17 0V8H8ZM0 9H7V15.7L0 14.7ZM8 9H17V17L8 15.85Z" fill="#fff"/></svg>
<svg class="r" style="left:62px;top:738px;" width="26" height="20" viewBox="0 0 26 20"><g fill="#e6e6e6" stroke="#bdbdbd" stroke-width="0.6"><rect x="1" y="1" width="10" height="10" rx="1.5"/><rect x="14" y="1" width="10" height="10" rx="1.5"/><rect x="7" y="9" width="10" height="10" rx="1.5"/></g><g font-family="Liberation Sans" font-weight="bold" font-size="7.5" fill="#d42020" text-anchor="middle"><text x="6" y="8">u</text><text x="19" y="8">i</text><text x="12" y="16">n</text></g></svg>
<div class="r" style="left:100px;top:728px;width:160px;height:40px;background:#333333;"></div>
<div class="r" style="left:100px;top:766px;width:160px;height:2px;background:#76b9ed;"></div>
<svg class="r" style="left:112px;top:737px;" width="15" height="22" viewBox="0 0 15 22"><path d="M0.5 2.5L9 0.5V21.5L0.5 19.5Z" fill="#f3c74f"/><path d="M0.5 3.5H14V20H0.5Z" fill="#f8d775"/><path d="M9 3.5V21.5" stroke="#e0b64a"/></svg>
<div class="t " style="left:138px;top:740.0px;font-size:12px;line-height:16px;color:#fff;">Temp</div>
<div class="r" style="left:265px;top:766px;width:152px;height:2px;background:#76b9ed;"></div>
<svg class="r" style="left:272px;top:737px;" width="22" height="22" viewBox="0 0 22 22"><circle cx="11" cy="11" r="10.5" fill="#db4437"/><path d="M11 11L20.1 5.75A10.5 10.5 0 0 1 11 21.5Z" fill="#f4c20d"/><path d="M11 11L11 21.5A10.5 10.5 0 0 1 1.9 5.75Z" fill="#0f9d58"/><circle cx="11" cy="11" r="5" fill="#fff"/><circle cx="11" cy="11" r="3.8" fill="#4285f4"/></svg>
<div class="t " style="left:299px;top:740.0px;font-size:12px;line-height:16px;color:#fff;">Tab mới - Google C...</div>
<div class="r" style="left:425px;top:766px;width:152px;height:2px;background:#76b9ed;"></div>
<svg class="r" style="left:432px;top:737px;" width="22" height="22" viewBox="0 0 22 22"><circle cx="11" cy="11" r="10.5" fill="#db4437"/><path d="M11 11L20.1 5.75A10.5 10.5 0 0 1 11 21.5Z" fill="#f4c20d"/><path d="M11 11L11 21.5A10.5 10.5 0 0 1 1.9 5.75Z" fill="#0f9d58"/><circle cx="11" cy="11" r="5" fill="#fff"/><circle cx="11" cy="11" r="3.8" fill="#4285f4"/></svg>
<div class="t " style="left:459px;top:740.0px;font-size:12px;line-height:16px;color:#fff;">Tab mới - Google C...</div>
<div class="r" style="left:586px;top:766px;width:152px;height:2px;background:#76b9ed;"></div>
<svg class="r" style="left:595px;top:738px;" width="18" height="19" viewBox="0 0 18 19"><path d="M0 0H18V13L13 19H0Z" fill="#f6e27a"/><path d="M18 13H13V19Z" fill="#c9b24a"/></svg>
<div class="t " style="left:619px;top:740.0px;font-size:12px;line-height:16px;color:#fff;">Sticky Notes</div>
<svg class="r" style="left:1146px;top:743px;" width="13" height="8" viewBox="0 0 13 8"><path d="M0.5 7.5L6.5 1L12.5 7.5" fill="none" stroke="#fff" stroke-width="1.3"/></svg>
<svg class="r" style="left:1167px;top:739px;" width="19" height="16" viewBox="0 0 19 16"><path d="M2 1V5M5 1V5M0.5 5H6.5V8Q3.5 11 3.5 8V15" fill="none" stroke="#fff" stroke-width="1"/><rect x="7.5" y="5.5" width="10" height="7" fill="none" stroke="#fff"/><path d="M10 7L15 11M15 7L10 11" stroke="#fff"/></svg>
<svg class="r" style="left:1195px;top:740px;" width="15" height="15" viewBox="0 0 15 15"><path d="M1 14A13 13 0 0 1 14 1M4 14A10 10 0 0 1 14 4M7 14A7 7 0 0 1 14 7M10 14A4 4 0 0 1 14 10" fill="none" stroke="#fff" stroke-width="1.1"/></svg>
<div class="t " style="left:1218px;top:740.0px;font-size:12px;line-height:16px;color:#fff;">ENG</div>
<div class="t" style="left:1221.0px;width:120px;text-align:center;top:731.0px;font-size:12px;line-height:16px;color:#fff;">10:52 AM</div>
<div class="t" style="left:1221.0px;width:120px;text-align:center;top:748.0px;font-size:12px;line-height:16px;color:#fff;">8/10/2017</div>
<svg class="r" style="left:1324px;top:738px;" width="28" height="24" viewBox="0 0 28 24"><path d="M1 1H18V13H9L5 17V13H1Z" fill="#fff"/><path d="M4 4.5H15M4 7H15M4 9.5H12" stroke="#777" stroke-width="1"/><circle cx="16.5" cy="15.5" r="7.5" fill="#3a3a3a" stroke="#6a6a6a" stroke-width="1"/><text x="16.5" y="19.5" font-size="11" font-weight="bold" fill="#fff" text-anchor="middle" font-family="Liberation Sans">1</text></svg>
<div class="r" style="left:1361px;top:728px;width:1px;height:40px;background:#444;"></div>
</body></html>
